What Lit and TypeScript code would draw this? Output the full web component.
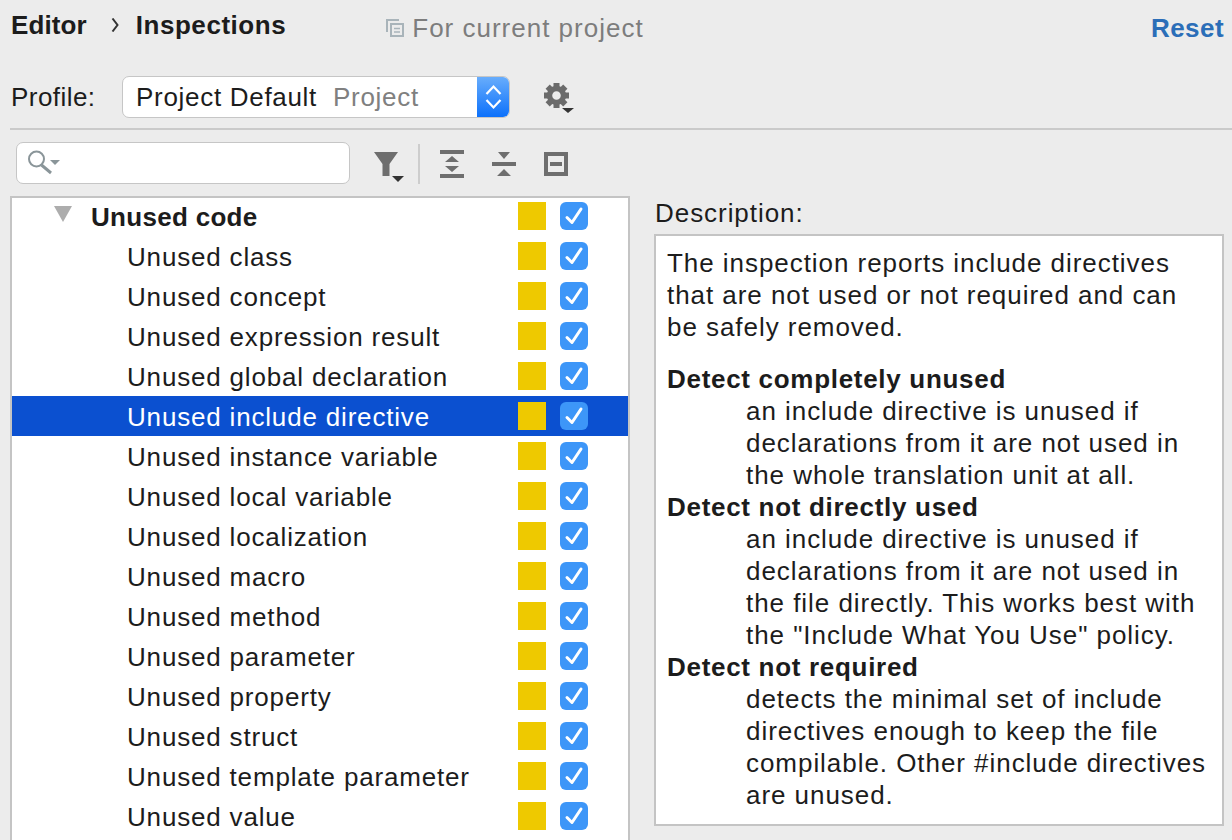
import { LitElement, html, css, svg } from 'lit';
import { customElement } from 'lit/decorators.js';

const rows = [
  'Unused class',
  'Unused concept',
  'Unused expression result',
  'Unused global declaration',
  'Unused include directive',
  'Unused instance variable',
  'Unused local variable',
  'Unused localization',
  'Unused macro',
  'Unused method',
  'Unused parameter',
  'Unused property',
  'Unused struct',
  'Unused template parameter',
  'Unused value',
];

const check = svg`<path d="M7 15.5 L12 20.5 L21 7" fill="none" stroke="#fff" stroke-width="3" stroke-linecap="round" stroke-linejoin="round"/>`;

const teeth = [0, 45, 90, 135, 180, 225, 270, 315];

@customElement('app-root')
export class AppRoot extends LitElement {
  static styles = css`
    :host {
      display: block;
      width: 1232px;
      height: 840px;
      overflow: hidden;
      background: #ececec;
      font-family: 'Liberation Sans', Arial, sans-serif;
      font-size: 26px;
      color: #1c1c1c;
      letter-spacing: 0.45px;
    }
    svg { display: block; flex: none; }
    .crumbs {
      display: flex;
      align-items: center;
      height: 50px;
      padding: 0 8px 0 11px;
    }
    .crumbs b { font-weight: 700; letter-spacing: 0.55px; }
    .crumbs b.editor { letter-spacing: 0.1px; margin-right: 24px; }
    .chev { margin: 0 17px 0 0; }
    .scope {
      display: flex;
      align-items: center;
      gap: 8px;
      margin-left: 100px;
      color: #7d7d7d;
      padding-top: 6px;
      letter-spacing: 1px;
    }
    .reset {
      margin-left: auto;
      color: #2b6eb8;
      font-weight: 700;
      padding-top: 6px;
    }
    .profile {
      display: flex;
      align-items: center;
      height: 42px;
      margin-top: 26px;
      padding-left: 11px;
    }
    .profile label { width: 111px; }
    .combo {
      display: flex;
      align-items: center;
      width: 388px;
      height: 42px;
      box-sizing: border-box;
      background: #fff;
      border: 1px solid #c6c6c6;
      border-radius: 7px;
      padding-left: 13px;
      position: relative;
      overflow: hidden;
      letter-spacing: 0.7px;
    }
    .combo .muted { color: #808080; margin-left: 16px; }
    .stepper {
      position: absolute;
      top: -1px;
      bottom: -1px;
      right: -1px;
      width: 33px;
      display: flex;
      align-items: center;
      justify-content: center;
      background: linear-gradient(#6aaefc, #0a6ffb);
    }
    .gear { margin-left: 34px; }
    .rule {
      height: 2px;
      margin: 10px 0 0 10px;
      background: #cacaca;
    }
    .tools {
      display: flex;
      align-items: center;
      height: 42px;
      margin-top: 12px;
      padding-left: 16px;
    }
    .search {
      width: 334px;
      height: 42px;
      box-sizing: border-box;
      background: #fff;
      border: 1px solid #c6c6c6;
      border-radius: 7px;
      display: flex;
      align-items: center;
      padding-left: 11px;
    }
    .tool-icons { margin-left: 24px; }
    .body {
      display: flex;
      margin-top: 12px;
      padding-left: 10px;
    }
    .list {
      width: 620px;
      height: 700px;
      box-sizing: border-box;
      flex: none;
      background: #fff;
      border: 2px solid #c4c4c4;
      border-bottom: none;
      letter-spacing: 0.82px;
    }
    .row {
      display: flex;
      align-items: center;
      height: 40px;
      padding-left: 115px;
      position: relative;
    }
    .label { padding-top: 2px; }
    .row.group {
      height: 38px;
      padding-left: 79px;
      font-weight: 700;
      letter-spacing: 0.3px;
    }
    .group .label { padding-top: 0; }
    .row.sel { background: #0b50d0; color: #fff; }
    .tri { position: absolute; left: 42px; top: 8px; }
    .swatch {
      margin-left: auto;
      width: 28px;
      height: 28px;
      background: #eec900;
    }
    .box {
      width: 28px;
      height: 28px;
      margin: 0 40px 0 14px;
      border-radius: 6px;
      background: #3d96f8;
    }
    .group .swatch, .group .box { position: relative; top: -1px; }
    .side {
      flex: 1;
      margin-left: 24px;
      margin-right: 8px;
      min-width: 0;
      letter-spacing: 0.95px;
    }
    .side h4 {
      font: inherit;
      margin: 0;
      height: 38px;
      line-height: 34px;
      padding-left: 1px;
    }
    .desc {
      box-sizing: border-box;
      height: 592px;
      background: #fff;
      border: 2px solid #c4c4c4;
      padding: 11px 0 0 11px;
      line-height: 32px;
    }
    .desc p { margin: 0 0 20px; }
    .desc dl { margin: 0; }
    .desc dt { font-weight: 700; letter-spacing: 0.7px; }
    .desc dd { margin: 0 0 0 79px; }
  `;

  render() {
    return html`
      <div class="crumbs">
        <b class="editor">Editor</b>
        <svg class="chev" width="8" height="14" viewBox="0 0 8 14"><path d="M1.5 0.5 L6.5 7 L1.5 13.5" fill="none" stroke="#333" stroke-width="2"/></svg>
        <b>Inspections</b>
        <span class="scope">
          <svg width="18" height="18" viewBox="0 0 18 18" fill="none" stroke="#a9b4ba" stroke-width="2">
            <path d="M1 13 V1 H13"/><rect x="5" y="5" width="12" height="12"/><path d="M8 9.5 H14 M8 13 H14" stroke-width="1.6"/>
          </svg>
          For current project
        </span>
        <span class="reset">Reset</span>
      </div>
      <div class="profile">
        <label>Profile:</label>
        <div class="combo">
          Project Default<span class="muted">Project</span>
          <div class="stepper">
            <svg width="17" height="26" viewBox="0 0 17 26" fill="none" stroke="#fff" stroke-width="2.2">
              <path d="M1.5 10 L8.5 2.5 L15.5 10 M1.5 16 L8.5 23.5 L15.5 16"/>
            </svg>
          </div>
        </div>
        <svg class="gear" width="30" height="31" viewBox="0 0 30 31">
          ${teeth.map(
            (a) => svg`<rect x="9.5" y="1" width="6" height="6" fill="#6b6b6b" transform="rotate(${a} 12.5 13.5)"/>`
          )}
          <circle cx="12.5" cy="13.5" r="7" fill="none" stroke="#6b6b6b" stroke-width="5.4"/>
          <path d="M18 26 H30 L24 31 Z" fill="#333"/>
        </svg>
      </div>
      <div class="rule"></div>
      <div class="tools">
        <div class="search">
          <svg width="34" height="26" viewBox="0 0 34 26" fill="none">
            <circle cx="8.5" cy="9" r="7.5" stroke="#8a9599" stroke-width="2"/>
            <path d="M13.5 15 L23 23" stroke="#8a9599" stroke-width="3"/>
            <path d="M22 10 H32 L27 15 Z" fill="#8a9599"/>
          </svg>
        </div>
        <svg class="tool-icons" width="194" height="42" viewBox="374 142 194 42">
          <g fill="#6e6e6e">
            <path d="M374 152 H398 L389.5 164 V176 H382.5 V164 Z"/>
            <path d="M440 150 H464 V154 H440 Z M440 174 H464 V178 H440 Z M452 156 L459 162 H445 Z M452 172 L445 166 H459 Z"/>
            <path d="M492 162 H516 V166 H492 Z M498 152 H510 L504 159 Z M504 169 L511 176 H497 Z"/>
            <path fill-rule="evenodd" d="M544 152 H568 V176 H544 Z M548 156 V172 H564 V156 Z M550 162 H562 V166 H550 Z"/>
          </g>
          <path d="M392 176 H404 L398 182 Z" fill="#333"/>
          <rect x="418" y="144" width="2" height="40" fill="#cdcdcd"/>
        </svg>
      </div>
      <div class="body">
        <div class="list">
          <div class="row group">
            <svg class="tri" width="18" height="16" viewBox="0 0 18 16"><path d="M0 0 H18 L9 16 Z" fill="#adadad"/></svg>
            <span class="label">Unused code</span>
            <span class="swatch"></span>
            <span class="box"><svg width="28" height="28" viewBox="0 0 28 28">${check}</svg></span>
          </div>
          ${rows.map(
            (r, i) => html`
              <div class="row ${i === 4 ? 'sel' : ''}">
                <span class="label">${r}</span>
                <span class="swatch"></span>
                <span class="box"><svg width="28" height="28" viewBox="0 0 28 28">${check}</svg></span>
              </div>
            `
          )}
        </div>
        <div class="side">
          <h4>Description:</h4>
          <div class="desc">
            <p>The inspection reports include directives<br />that are not used or not required and can<br />be safely removed.</p>
            <dl>
              <dt>Detect completely unused</dt>
              <dd>an include directive is unused if<br />declarations from it are not used in<br />the whole translation unit at all.</dd>
              <dt>Detect not directly used</dt>
              <dd>an include directive is unused if<br />declarations from it are not used in<br />the file directly. This works best with<br />the "Include What You Use" policy.</dd>
              <dt>Detect not required</dt>
              <dd>detects the minimal set of include<br />directives enough to keep the file<br />compilable. Other #include directives<br />are unused.</dd>
            </dl>
          </div>
        </div>
      </div>
    `;
  }
}
